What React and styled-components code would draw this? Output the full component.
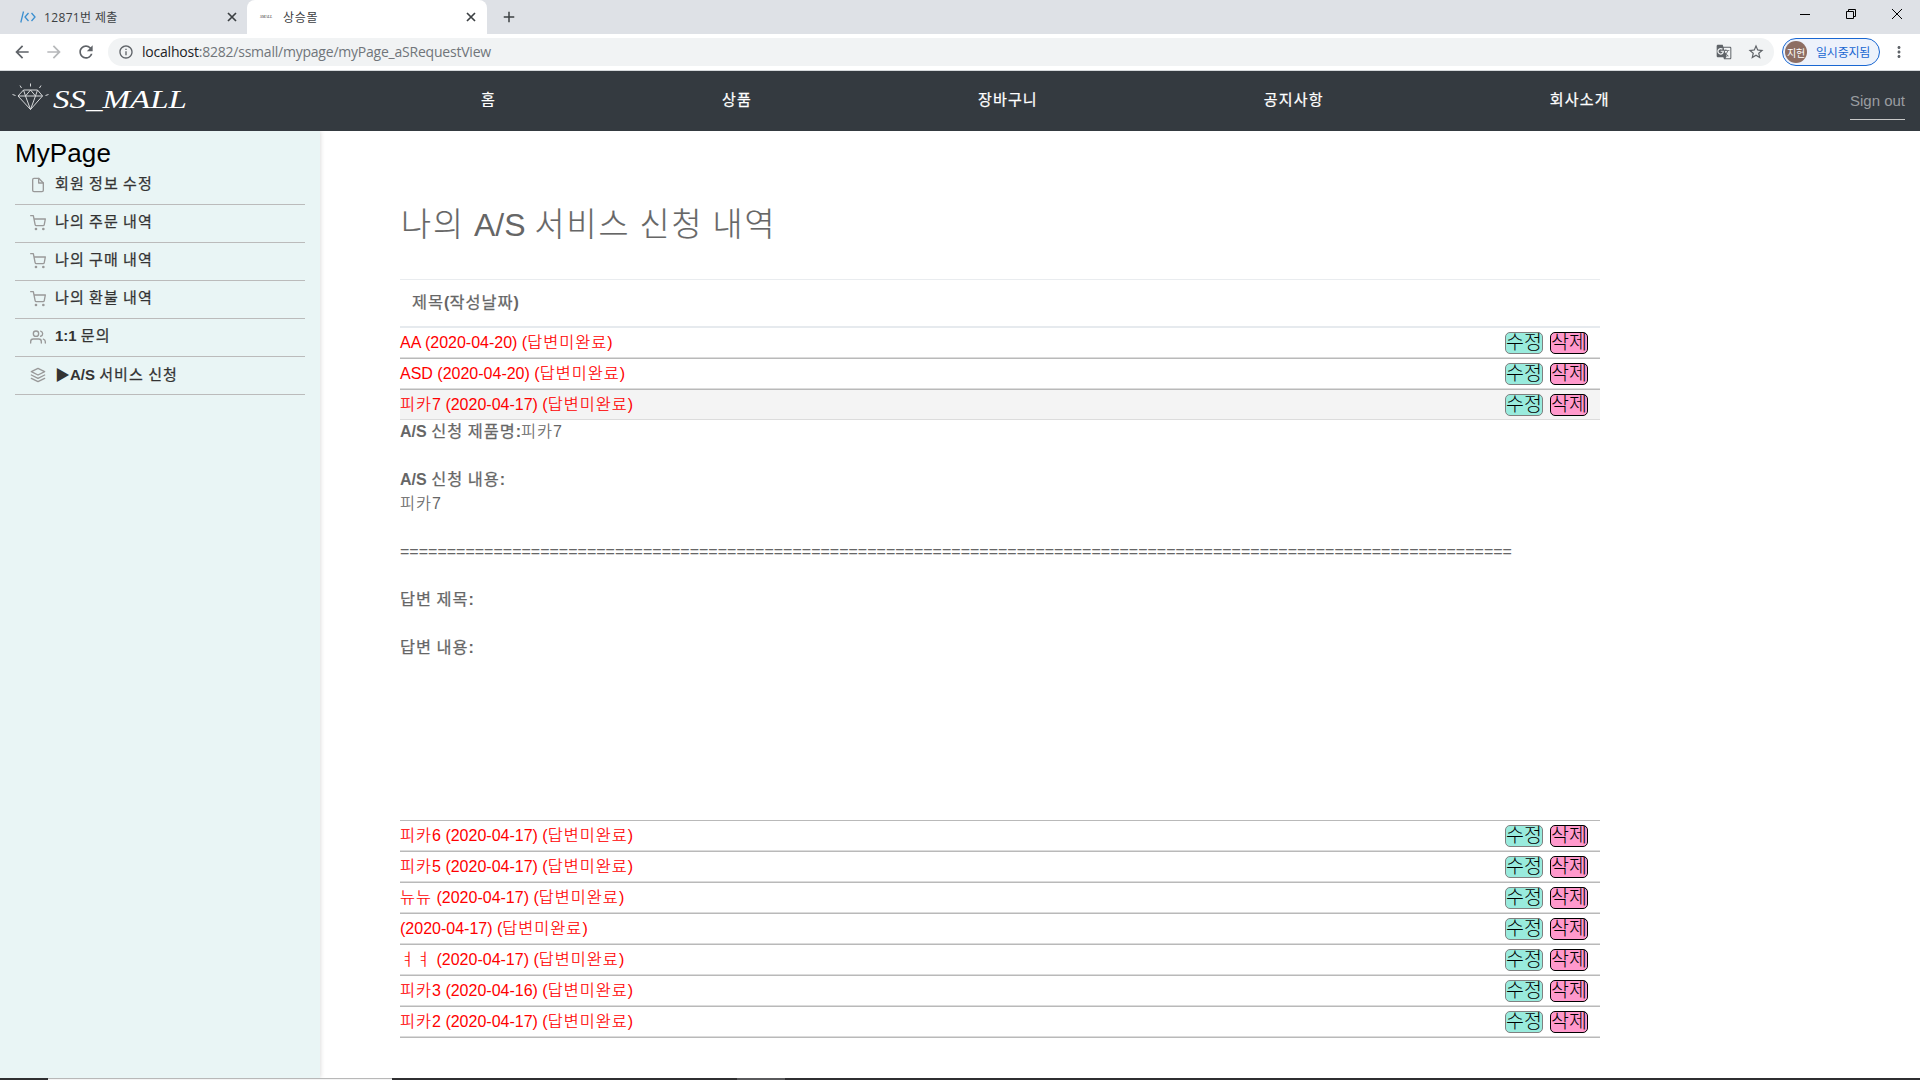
import React from "react";
import styled, { createGlobalStyle } from "styled-components";
import { FiFile, FiShoppingCart, FiUsers, FiLayers } from "react-icons/fi";
import { MdArrowBack, MdArrowForward, MdRefresh, MdInfoOutline, MdStarBorder, MdGTranslate, MdMoreVert, MdAdd } from "react-icons/md";

const GlobalStyle = createGlobalStyle`
  * { box-sizing: border-box; }
  body {
    margin: 0;
    background: #fff;
    overflow: hidden;
    font-family: "Liberation Sans", "Noto Sans CJK KR", sans-serif;
    font-size: 16px;
    color: #666;
  }
`;

const Window = styled.div`
  display: flex;
  flex-direction: column;
  width: 1920px;
  height: 1080px;
`;

/* Hangul runs are set slightly wider than the Latin text beside them */
const HangulRun = styled.span`
  font-family: "Noto Sans CJK KR", sans-serif;
  font-size: ${(p) => p.$size}em;
  letter-spacing: ${(p) => p.$track}em;
  line-height: 1;
  font-weight: ${(p) => (p.$strong ? 400 : 300)};
  -webkit-text-stroke: ${(p) => (p.$strong ? "0.25px" : "0.2px")} currentColor;
`;

function Mixed({ children, size = 1.02, track = 0.062, strong = false }) {
  return children
    .split(/([\u3131-\u318e\uac00-\ud7a3]+)/)
    .filter(Boolean)
    .map((part, i) =>
      /[\u3131-\u318e\uac00-\ud7a3]/.test(part) ? (
        <HangulRun key={i} $size={size} $track={track} $strong={strong}>{part}</HangulRun>
      ) : (
        <React.Fragment key={i}>{part}</React.Fragment>
      )
    );
}

/* ---------- browser chrome ---------- */
const TabStrip = styled.div`
  display: flex;
  height: 34px;
  background: #dee1e6;
  font-family: "Open Sans", "Noto Sans CJK KR", sans-serif;
  font-size: 12px;
  color: #3c4043;
`;

const Tab = styled.div`
  display: flex;
  align-items: center;
  width: ${(p) => p.$width}px;
  padding: 0 ${(p) => p.$end}px 0 ${(p) => p.$pad}px;
  gap: ${(p) => p.$gap}px;
  background: ${(p) => (p.$active ? "#fff" : "transparent")};
  border-radius: 8px 8px 0 0;
`;

const TabTitle = styled.span`
  flex: 1;
  white-space: nowrap;
  letter-spacing: ${(p) => p.$track || 0}px;
`;

const Favicon = styled.span`
  display: flex;
  width: 16px;
  font: italic 4px/16px "Liberation Serif", serif;
  color: #333;
`;

const NewTab = styled.div`
  display: flex;
  align-items: center;
  padding-left: 13px;
  flex: 1;
  svg { width: 18px; height: 18px; }
`;

const WindowButtons = styled.div`
  display: flex;
  gap: 36px;
  padding: 9px 18px 0 0;
  svg { display: block; width: 10px; height: 10px; fill: none; stroke: #000; }
`;

const Toolbar = styled.div`
  display: flex;
  align-items: center;
  height: 37px;
  padding: 0 12px 0 6px;
  border-bottom: 1px solid #d5d8db;
  color: #5f6368;
  font-family: "Open Sans", "Noto Sans CJK KR", sans-serif;
`;

const ToolIcon = styled.span`
  display: flex;
  justify-content: center;
  width: 32px;
  opacity: ${(p) => (p.$dim ? 0.45 : 1)};
  svg { width: 20px; height: 20px; }
`;

const AddressBar = styled.div`
  display: flex;
  align-items: center;
  width: 1666px;
  height: 28px;
  margin-left: 6px;
  padding: 0 9px 0 10px;
  background: #f1f3f4;
  border-radius: 14px;
  svg { width: 16px; height: 16px; }
`;

const Url = styled.span`
  flex: 1;
  margin-left: 8px;
  font-size: 14px;
  letter-spacing: -0.22px;
  line-height: 18px;
  padding-bottom: 1px;
  color: #70757a;
  b { font-weight: 400; color: #202124; }
`;

const AddressActions = styled.span`
  display: flex;
  align-items: center;
  gap: 15px;
  svg:last-child { width: 18px; height: 18px; }
`;

const Profile = styled.div`
  display: flex;
  align-items: center;
  width: 98px;
  height: 28px;
  margin: 0 10px 0 8px;
  padding-left: 2px;
  gap: 9px;
  border: 1px solid #1967d2;
  border-radius: 14px;
  background: #edf2fb;
  color: #1967d2;
  font-size: 12px;
  letter-spacing: -0.2px;
  white-space: nowrap;
`;

const Avatar = styled.span`
  display: flex;
  align-items: center;
  justify-content: center;
  width: 22px;
  height: 22px;
  border-radius: 50%;
  background: #8d6e63;
  color: #fff;
  font-size: 10px;
`;

/* ---------- site header ---------- */
const Header = styled.header`
  display: flex;
  align-items: flex-start;
  height: 60px;
  background: #343a40;
`;

const Brand = styled.div`
  display: flex;
  align-items: flex-start;
  width: 481px;
  padding: 12px 0 0 12px;
  gap: 4px;
`;

const BrandName = styled.span`
  font: italic 26px/34px "Liberation Serif", serif;
  color: #fff;
  transform: scaleX(1.27);
  transform-origin: left center;
`;

const Menu = styled.nav`
  display: flex;
  gap: 226px;
  padding-top: 18px;
  color: #fff;
  font-size: 15px;
  line-height: 22px;
`;

const SignOut = styled.a`
  margin: 12px 15px 0 auto;
  height: 37px;
  line-height: 35px;
  font-size: 15px;
  color: #9a9da0;
  border-bottom: 1px solid #c8c8c8;
`;

/* ---------- page ---------- */
const Body = styled.div`
  display: flex;
  height: 947px;
`;

const Sidebar = styled.aside`
  width: 320px;
  padding: 6px 15px 0;
  background: #e9f5f5;
  box-shadow: 0 0 5px rgba(0, 0, 0, 0.18);
  clip-path: inset(0 -8px 0 0);
`;

const SideTitle = styled.h2`
  margin: 0;
  height: 30px;
  font-size: 26px;
  line-height: 32px;
  letter-spacing: 0.1px;
  font-weight: 400;
  color: #000;
`;

const SideItem = styled.div`
  display: flex;
  align-items: center;
  height: 38px;
  padding: 0 0 5px 15px;
  gap: 9px;
  border-bottom: 1px solid #bbb;
  color: #333;
  font-size: 15px;
  font-weight: 700;
  svg { width: 16px; height: 16px; margin-top: 3px; color: #999; stroke-width: 2; }
`;

const Content = styled.main`
  width: 1200px;
  margin-left: 80px;
`;

const Title = styled.h1`
  margin: 0;
  height: 148px;
  padding: 70px 0 0 1px;
  font-size: 32px;
  line-height: 48px;
  font-weight: 400;
  color: #666;
  white-space: nowrap;
`;

const HeadRow = styled.div`
  height: 49px;
  padding-left: 12px;
  border-top: 1px solid #e9ecef;
  border-bottom: 2px solid #e6eaee;
  line-height: 46px;
  font-weight: 700;
`;

const Row = styled.div`
  display: flex;
  align-items: flex-start;
  height: ${(p) => (p.$open ? 30 : 31)}px;
  padding-right: 12px;
  background: ${(p) => (p.$open ? "#f4f4f4" : "#fff")};
  border-bottom: ${(p) => (p.$open ? "1px solid #dcdcdc" : "0")};
  box-shadow: ${(p) => (p.$open ? "none" : "inset 0 -1px #b9b9b9, inset 0 -2px #dcdcdc")};
`;

const RowText = styled.span`
  flex: 1;
  color: #f00;
  line-height: 29px;
`;

const ActionButton = styled.button`
  width: 38px;
  height: 22px;
  margin: 4px 0 0 7px;
  padding: 0;
  border: 1px solid ${(p) => (p.$danger ? "#000" : "#808080")};
  border-radius: 5px;
  background: ${(p) => (p.$danger ? "#ff99cc" : "#99ebdd")};
  color: #000;
  font: 300 19.5px/18px "Noto Sans CJK KR", sans-serif;
  white-space: nowrap;
  display: flex;
  justify-content: center;
  align-items: flex-start;
  span { margin-top: -1px; }
`;

const Detail = styled.div`
  height: 401px;
  border-bottom: 1px solid #b9b9b9;
  line-height: 24px;
`;

const Line = styled.div`
  height: 24px;
  white-space: nowrap;
`;

const Taskbar = styled.div`
  display: flex;
  height: 2px;
  background: #2f2f31;
`;

const TaskSegment = styled.span`
  width: ${(p) => p.$width}px;
  background: ${(p) => p.$tone};
  border-top: 1px solid ${(p) => p.$edge || "transparent"};
`;

const sideItems = [
  [FiFile, "회원 정보 수정"],
  [FiShoppingCart, "나의 주문 내역"],
  [FiShoppingCart, "나의 구매 내역"],
  [FiShoppingCart, "나의 환불 내역"],
  [FiUsers, "1:1 문의"],
  [FiLayers, "▶A/S 서비스 신청"],
];

const recent = ["AA (2020-04-20)", "ASD (2020-04-20)", "피카7 (2020-04-17)"];
const older = [
  "피카6 (2020-04-17)",
  "피카5 (2020-04-17)",
  "뉴뉴 (2020-04-17)",
  "(2020-04-17)",
  "ㅕㅕ (2020-04-17)",
  "피카3 (2020-04-16)",
  "피카2 (2020-04-17)",
];

function RequestRow({ label, open }) {
  return (
    <Row $open={open}>
      <RowText><Mixed>{`${label} (답변미완료)`}</Mixed></RowText>
      <ActionButton><span>수정</span></ActionButton>
      <ActionButton $danger><span>삭제</span></ActionButton>
    </Row>
  );
}

function TabClose() {
  return (
    <svg width="10" height="10" viewBox="0 0 10 10" stroke="#3c4043" strokeWidth="1.700">
      <path d="M1 1l8 8M9 1L1 9" />
    </svg>
  );
}

function Diamond() {
  return (
    <svg width="37" height="28" viewBox="0 0 37 28" fill="none" stroke="#d6d8da" strokeWidth="1">
      <path d="M11.500 7h14l5 6-12 13.500L6 13z M6 13h24.500 M11.500 7l2 6 5 13.500L23.500 13l2-6 M13.500 13l5-6 5 6" />
      <path d="M18.500 0.500v3 M8 2.500l1.500 2.500 M29 2.500L27.500 5 M0.500 11.500l3 1 M36.500 11.500l-3 1" />
    </svg>
  );
}

export default function App() {
  return (
    <Window>
      <GlobalStyle />
      <TabStrip>
        <Tab $width={247} $pad={20} $gap={8} $end={10}>
          <svg width="16" height="12" viewBox="0 0 16 12" fill="none" stroke="#3b8fd0" strokeWidth="1.300">
            <path d="M3.500 0.500L0.800 11.500 M8.500 2L5 6l3.500 4 M11.500 2L15 6l-3.500 4" />
          </svg>
          <TabTitle $track={0.35}>12871번 제출</TabTitle>
          <TabClose />
        </Tab>
        <Tab $active $width={240} $pad={13} $gap={7} $end={11}>
          <Favicon>SMALL</Favicon>
          <TabTitle $track={0.7}>상승몰</TabTitle>
          <TabClose />
        </Tab>
        <NewTab><MdAdd /></NewTab>
        <WindowButtons>
          <svg viewBox="0 0 10 10"><path d="M0 5.500h10" /></svg>
          <svg viewBox="0 0 10 10"><path d="M0.500 2.500h7v7h-7z M2.500 2.500v-2h7v7h-2" /></svg>
          <svg viewBox="0 0 10 10"><path d="M0 0l10 10M10 0L0 10" /></svg>
        </WindowButtons>
      </TabStrip>
      <Toolbar>
        <ToolIcon><MdArrowBack /></ToolIcon>
        <ToolIcon $dim><MdArrowForward /></ToolIcon>
        <ToolIcon><MdRefresh /></ToolIcon>
        <AddressBar>
          <MdInfoOutline />
          <Url><b>localhost</b>:8282/ssmall/mypage/myPage_aSRequestView</Url>
          <AddressActions>
            <MdGTranslate />
            <MdStarBorder />
          </AddressActions>
        </AddressBar>
        <Profile><Avatar>지헌</Avatar>일시중지됨</Profile>
        <MdMoreVert size={18} />
      </Toolbar>
      <Header>
        <Brand>
          <Diamond />
          <BrandName>SS_MALL</BrandName>
        </Brand>
        <Menu>
          {["홈", "상품", "장바구니", "공지사항", "회사소개"].map((m) => (
            <span key={m}><Mixed strong size={1} track={0.078}>{m}</Mixed></span>
          ))}
        </Menu>
        <SignOut>Sign out</SignOut>
      </Header>
      <Body>
        <Sidebar>
          <SideTitle>MyPage</SideTitle>
          {sideItems.map(([Icon, label]) => (
            <SideItem key={label}>
              <Icon />
              <span><Mixed strong size={1} track={0.075}>{label}</Mixed></span>
            </SideItem>
          ))}
        </Sidebar>
        <Content>
          <Title><Mixed size={1.02} track={0.062}>나의 A/S 서비스 신청 내역</Mixed></Title>
          <HeadRow><Mixed strong>제목(작성날짜)</Mixed></HeadRow>
          {recent.map((label, i) => <RequestRow key={label} label={label} open={i === 2} />)}
          <Detail>
            <Line><b><Mixed strong>A/S 신청 제품명:</Mixed></b><Mixed>피카7</Mixed></Line>
            <Line />
            <Line><b><Mixed strong>A/S 신청 내용:</Mixed></b></Line>
            <Line><Mixed>피카7</Mixed></Line>
            <Line />
            <Line>{"=".repeat(119)}</Line>
            <Line />
            <Line><b><Mixed strong>답변 제목:</Mixed></b></Line>
            <Line />
            <Line><b><Mixed strong>답변 내용:</Mixed></b></Line>
          </Detail>
          {older.map((label) => <RequestRow key={label} label={label} />)}
        </Content>
      </Body>
      <Taskbar>
        <TaskSegment $width={48} $tone="#2f2f31" />
        <TaskSegment $width={344} $tone="#f4f4f4" $edge="#b8b8b8" />
        <TaskSegment $width={345} $tone="#2f2f31" />
        <TaskSegment $width={48} $tone="#5a5a5c" $edge="#5a5a5c" />
      </Taskbar>
    </Window>
  );
}
